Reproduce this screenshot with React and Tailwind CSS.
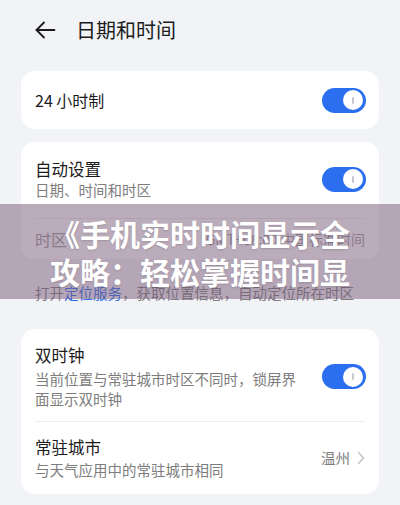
import React from 'react';

const FONT = { fontFamily: '"Noto Sans CJK SC", "Noto Sans", sans-serif' };

const Toggle = () => (
  <div className="relative w-[44px] h-[25px] rounded-full bg-[#2b6ef0] shrink-0">
    <div className="absolute right-[3px] top-[2.5px] w-[20px] h-[20px] rounded-full bg-white flex items-center justify-center">
      <div className="w-[1.5px] h-[7px] rounded-full bg-[#c4c8d0]" />
    </div>
  </div>
);

const App = () => {
  return (
    <div className="relative w-[400px] h-[505px] bg-[#f1f3f6] overflow-hidden" style={FONT}>
      {/* header */}
      <div className="h-[60px] flex items-center pl-[35px]">
        <svg width="21" height="18" viewBox="0 0 21 18" fill="none" stroke="#1c1c1c" strokeWidth="1.8" strokeLinecap="round" strokeLinejoin="round">
          <path d="M19.5 9H1.5" />
          <path d="M9 1.5L1.5 9L9 16.5" />
        </svg>
        <span className="ml-[20px] text-[20px] leading-[26px] text-[#1b1b1b]">日期和时间</span>
      </div>

      <div className="px-[21px] pt-[11px]">
        {/* 24 hour */}
        <div className="bg-white rounded-[14px] h-[58px] px-[14px] flex items-center justify-between">
          <span className="text-[16px] leading-[22px] text-[#1b1b1b]">24 小时制</span>
          <div className="mr-[-1px]"><Toggle /></div>
        </div>

        {/* auto settings */}
        <div className="bg-white rounded-[14px] mt-[13px] px-[14px]">
          <div className="flex items-center justify-between pt-[16px] pb-[18px]">
            <div>
              <div className="text-[16.5px] leading-[22px] text-[#1b1b1b]">自动设置</div>
              <div className="text-[14.5px] leading-[20px] text-[#7d7d7d]">日期、时间和时区</div>
            </div>
            <div className="mr-[-1px]"><Toggle /></div>
          </div>
          <div className="h-px bg-[#ebebeb]" />
          <div className="h-[40px] flex items-center justify-between">
            <span className="text-[16px] leading-[22px] text-[#9a9a9a]">时区</span>
            <span className="text-[14px] leading-[20px] text-[#9a9a9a]">GMT+08:00 中国标准时间</span>
          </div>
        </div>

        <div className="mt-[24px] px-[14px] text-[14.5px] leading-[20px] text-[#7d7d7d] whitespace-nowrap">
          打开<span className="text-[#2b6ef0]">定位服务</span>，获取位置信息，自动定位所在时区
        </div>

        {/* dual clock */}
        <div className="bg-white rounded-[14px] mt-[26px] px-[14px]">
          <div className="flex items-center justify-between pt-[15px] pb-[12px]">
            <div className="w-[266px]">
              <div className="text-[16.5px] leading-[22px] text-[#1b1b1b]">双时钟</div>
              <div className="mt-[3px] text-[14.5px] leading-[20px] text-[#7d7d7d]">当前位置与常驻城市时区不同时，锁屏界面显示双时钟</div>
            </div>
            <div className="mr-[-1px]"><Toggle /></div>
          </div>
          <div className="h-px bg-[#ededed]" />
          <div className="flex items-center justify-between pt-[14px] pb-[14px]">
            <div>
              <div className="text-[16.5px] leading-[22px] text-[#1b1b1b]">常驻城市</div>
              <div className="mt-[2px] text-[14.5px] leading-[20px] text-[#7d7d7d]">与天气应用中的常驻城市相同</div>
            </div>
            <div className="flex items-center gap-[7px]">
              <span className="text-[14.5px] leading-[20px] text-[#7d7d7d]">温州</span>
              <svg width="8" height="14" viewBox="0 0 8 14" fill="none" stroke="#c2c2c2" strokeWidth="1.4" strokeLinecap="round" strokeLinejoin="round">
                <path d="M1.5 1.5L6.5 7L1.5 12.5" />
              </svg>
            </div>
          </div>
        </div>
      </div>

      {/* overlay title band */}
      <div className="absolute left-0 top-[204px] w-full h-[95px] bg-[rgba(120,90,120,0.5)] flex items-center justify-center overflow-hidden">
        <div className="w-[300px] text-center text-white font-bold text-[30px] leading-[38px] [text-shadow:0_1px_2px_rgba(0,0,0,0.15)]">
          《手机实时时间显示全攻略：轻松掌握时间显
        </div>
      </div>
    </div>
  );
};

export default App;
